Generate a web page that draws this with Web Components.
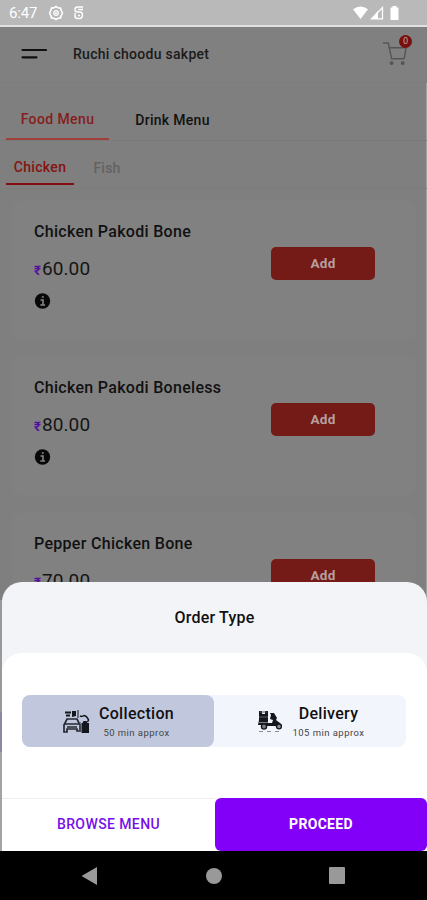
<!DOCTYPE html>
<html lang="en">
<head>
<meta charset="utf-8">
<title>Ruchi choodu sakpet</title>
<style>
  body {
    margin: 0;
    font-family: Roboto, "Noto Sans", sans-serif;
    background: #808080;
  }
</style>
</head>
<body>

<phone-screen>
  <status-bar slot="status" time="6:47"></status-bar>
  <shop-header name="Ruchi choodu sakpet" count="0"></shop-header>
  <menu-tabs></menu-tabs>
  <food-card name="Chicken Pakodi Bone" price="60.00"></food-card>
  <food-card name="Chicken Pakodi Boneless" price="80.00"></food-card>
  <food-card name="Pepper Chicken Bone" price="70.00"></food-card>
  <order-sheet slot="sheet" heading="Order Type">
    <order-option name="Collection" time="50 min approx" selected>
      <svg slot="icon" width="28" height="26" viewBox="0 0 28 26">
        <path d="M3 4.500h6M4 7.500h4" stroke="#15171f" stroke-width="1.800"/>
        <path d="M10 3h4v5l-4 1zM15.500 2h1v8h-1z" fill="#15171f"/>
        <path d="M18 8q2 1 4-.5 3 .5 4.500 4.500l-1 2" fill="none" stroke="#15171f" stroke-width="1.500"/>
        <path d="M2 17l3-6h10l3 6v6h-3v-2H5v3H2z" fill="none" stroke="#252833" stroke-width="1.700"/>
        <path d="M3 16h14M5 19h10" stroke="#252833" stroke-width="1.500"/>
        <path d="M19.500 15h1l1-2h3l1 2h1.500v10h-7.500z" fill="#15171f"/>
        <path d="M18 14v9" stroke="#4b5060"/>
      </svg>
    </order-option>
    <order-option name="Delivery" time="105 min approx">
      <svg slot="icon" width="28" height="26" viewBox="0 0 28 26">
        <path d="M3 3h3v3h3V3h3v9H3z" fill="#15171f"/>
        <path d="M4 4h7M3 9h9" stroke="#555a65"/>
        <path d="M3 12h9v5H2zM14 5h4l3 5-1 2 4 3 2 2-1 2h-4l-2-1H11v-3h5l1-3-3-1 1-4z" fill="#15171f"/>
        <path d="M3 14.500h9" stroke="#777c87"/>
        <circle cx="8" cy="18.500" r="2.600" fill="#747986" stroke="#15171f" stroke-width="1.300"/>
        <circle cx="23" cy="18.500" r="2.400" fill="#8d929e" stroke="#15171f" stroke-width="1.300"/>
        <path d="M3 23.500h23" stroke="#888d98" stroke-dasharray="4 4"/>
      </svg>
    </order-option>
  </order-sheet>
  <nav-bar slot="nav"></nav-bar>
</phone-screen>

<script>
// shared helper: clone a markup string into an open shadow root
function attach(el, html) {
  const template = document.createElement("template");
  template.innerHTML = html;
  el.attachShadow({ mode: "open" });
  el.shadowRoot.appendChild(template.content.cloneNode(true));
}

class PhoneScreen extends HTMLElement {
  constructor() {
    super();
    attach(this, `
      <style>
        :host { display: flex; flex-direction: column; width: 427px; height: 900px; overflow: hidden; }
        main {
          flex: 1;
          min-height: 0;
          position: relative;
          overflow: hidden;
          background: #7f7f7f;
          box-shadow: inset -1px 0 #a2a2a2;
        }
        .edge { position: absolute; left: 0; top: 573px; width: 3px; bottom: 0; background: linear-gradient(#999 0 112px, #8e87a2 112px 152px, #a4a4a4 152px); }
        ::slotted([slot="sheet"]) { position: absolute; left: 2px; right: 0; bottom: 0; }
      </style>
      <slot name="status"></slot>
      <main>
        <slot></slot>
        <div class="edge"></div>
        <slot name="sheet"></slot>
      </main>
      <slot name="nav"></slot>
    `);
  }
}

class StatusBar extends HTMLElement {
  constructor() {
    super();
    attach(this, `
      <style>
        :host {
          display: flex;
          align-items: center;
          box-sizing: border-box;
          height: 27px;
          padding: 1px 27px 0 9px;
          color: #fff;
          background: #b9b9b9;
          border-bottom: 2px solid #e0e0e0;
          font-size: 15px;
        }
        .time { width: 40px; letter-spacing: -.2px; }
        svg { display: block; }
        .gap { flex: 1; }
      </style>
      <span class="time">${this.getAttribute("time")}</span>
      <svg width="38" height="16" viewBox="0 0 38 16" fill="none" stroke="#fff">
        <path d="M7 1.500l2 1.300 2.500.3.700 2.400 1.300 2.500-1.300 2.500-.7 2.400-2.500.3-2 1.300-2-1.300-2.500-.3-.7-2.400L.500 8l1.300-2.500.7-2.400L5 2.800z" stroke-width="1.600"/>
        <circle cx="7" cy="8" r="2.300" stroke-width="1.300"/>
        <circle cx="7" cy="8" r="1" fill="#fff" stroke="none"/>
        <path d="M34 2h-5.500Q26 2 26 4.500T28.500 7H31q2.500 0 2.500 3T31 13.500h-2.500Q26 13.500 26 11V8M29 4.500h5M29 10.500h2" stroke-width="1.400"/>
      </svg>
      <span class="gap"></span>
      <svg width="47" height="16" viewBox="0 0 47 16" fill="#fff">
        <path d="M0 4.300Q7.500-1.300 15 4.300L7.500 14z"/>
        <path d="M29.500 2.500v11.300H18.500z" fill="none" stroke="#fff" stroke-width="1.300"/>
        <path d="M25 6v8h-7z"/>
        <path d="M37.500 2.500h2V1h4v1.500h2V15h-8z"/>
      </svg>
    `);
  }
}

class ShopHeader extends HTMLElement {
  constructor() {
    super();
    attach(this, `
      <style>
        :host {
          display: flex;
          align-items: center;
          box-sizing: border-box;
          height: 56px;
          padding: 0 14px 1px 21px;
          border-bottom: 1px solid #7d7d7d;
          background: #808080;
        }
        h1 { flex: 1; margin: 0 0 0 26px; font-size: 14px; font-weight: 500; color: #1b1b1b; letter-spacing: .28px; }
        .cart { position: relative; width: 30px; height: 40px; }
        .cart svg { display: block; margin-top: 7px; }
        .badge {
          position: absolute; left: 16px; top: 1px;
          width: 13px; height: 13px;
          border-radius: 50%;
          background: #790e0e;
          color: #bda7a7;
          font-size: 9px;
          line-height: 13px;
          text-align: center;
        }
      </style>
      <svg width="26" height="12" viewBox="0 0 26 12" stroke="#101010" stroke-width="2.200" stroke-linecap="round"><path d="M1.500 2H25M1.500 9.300H15.500"/></svg>
      <h1>${this.getAttribute("name")}</h1>
      <div class="cart">
        <svg width="26" height="25" viewBox="0 0 27 26" fill="none" stroke="#555" stroke-width="1.500">
          <path d="M0 2h5.500l1 5L9 18.500h13M6.500 7H24l-2 11.500"/>
          <circle cx="9" cy="23" r="1.300" fill="#555"/>
          <circle cx="20.500" cy="23" r="1.300" fill="#555"/>
        </svg>
        <span class="badge">${this.getAttribute("count")}</span>
      </div>
    `);
  }
}

class MenuTabs extends HTMLElement {
  constructor() {
    super();
    attach(this, `
      <style>
        :host { display: block; font-weight: 500; }
        .row { display: flex; box-sizing: border-box; padding-left: 6px; }
        .main { height: 58px; border-bottom: 1px solid #7a7a7a; font-size: 14px; }
        .sub { height: 48px; border-bottom: 1px solid #7c7c7c; }
        .tab { box-sizing: border-box; display: flex; align-items: center; justify-content: center; }
        .main .tab { width: 103px; height: 57px; padding-top: 16px; color: #111; }
        .main .on { border-bottom: 2px solid #a03e3c; color: #861d1d; padding-top: 17px; letter-spacing: .4px; }
        .main .tab + .tab { margin-left: 12px; letter-spacing: .3px; }
        .sub .tab { width: 68px; height: 44px; font-size: 14px; padding-top: 9px; color: #626262; letter-spacing: .2px; }
        .sub .on { border-bottom: 2px solid #850d0d; color: #871313; letter-spacing: .35px; padding-top: 10px; }
        .sub .tab + .tab { margin-left: -1px; }
      </style>
      <div class="row main">
        <span class="tab on">Food Menu</span>
        <span class="tab">Drink Menu</span>
      </div>
      <div class="row sub">
        <span class="tab on">Chicken</span>
        <span class="tab">Fish</span>
      </div>
    `);
  }
}

class FoodCard extends HTMLElement {
  constructor() {
    super();
    attach(this, `
      <style>
        :host {
          display: flex;
          box-sizing: border-box;
          width: 404px;
          height: 138px;
          margin: 12px 0 18.200px 12px;
          padding: 20px 41px 0 22px;
          border-radius: 8px;
          background: #818181;
        }
        .info { flex: 1; }
        h2 { margin: 1px 0 0; font-size: 16px; line-height: 20px; font-weight: 500; color: #111; letter-spacing: .3px; white-space: nowrap; }
        .price { margin-top: 15px; font-size: 19px; line-height: 24px; color: #151515; letter-spacing: .1px; }
        .price b { font-size: 13px; color: #5510a0; margin-right: 1px; }
        svg { display: block; margin-top: 10px; }
        .add {
          width: 104px; height: 33px;
          margin-top: 26px;
          border-radius: 5px;
          background: #741a17;
          color: #b4a0a0;
          font-size: 13.500px;
          letter-spacing: .3px;
          font-weight: 700;
          line-height: 32px;
          text-align: center;
        }
      </style>
      <div class="info">
        <h2>${this.getAttribute("name")}</h2>
        <div class="price"><b>₹</b>${this.getAttribute("price")}</div>
        <svg width="17" height="16" viewBox="0 0 17 16"><circle cx="8.500" cy="8" r="7.700" fill="#080808"/><path d="M6.500 7H9v5M6.300 12h4.800M7.800 4h2" stroke="#858585" stroke-width="1.600" fill="none"/></svg>
      </div>
      <span class="add">Add</span>
    `);
  }
}

class OrderSheet extends HTMLElement {
  constructor() {
    super();
    attach(this, `
      <style>
        :host {
          display: flex;
          flex-direction: column;
          height: 269px;
          border-radius: 20px 20px 0 0;
          background: #f3f4f7;
          overflow: hidden;
        }
        h3 { margin: 0; height: 71px; line-height: 72px; text-align: center; font-size: 16px; font-weight: 500; color: #111; letter-spacing: .2px; }
        .body { flex: 1; border-radius: 20px 20px 0 0; background: #fff; display: flex; flex-direction: column; }
        .options { display: flex; margin: 42px 21px 0 20px; height: 52px; border-radius: 8px; background: #f3f5fd; }
        ::slotted(*) { flex: 1; }
        .actions { display: flex; height: 53px; margin-top: auto; font-size: 14px; line-height: 52px; text-align: center; }
        .browse { flex: 1; border-top: 1px solid #eee; color: #7610e8; font-weight: 500; letter-spacing: .4px; line-height: 51px; }
        .proceed { width: 212px; background: #8200f8; color: #fff; border-radius: 6px; font-weight: 700; letter-spacing: .3px; line-height: 53px; }
      </style>
      <h3>${this.getAttribute("heading")}</h3>
      <div class="body">
        <div class="options"><slot></slot></div>
        <div class="actions">
          <span class="browse">BROWSE MENU</span>
          <span class="proceed">PROCEED</span>
        </div>
      </div>
    `);
  }
}

class OrderOption extends HTMLElement {
  constructor() {
    super();
    attach(this, `
      <style>
        :host { display: flex; align-items: center; justify-content: center; gap: 9px; border-radius: 8px; }
        :host([selected]) { background: #c1c8de; }
        .text { display: flex; flex-direction: column; align-items: center; color: #111; padding-top: 3px; }
        .name { font-size: 16px; line-height: 20px; font-weight: 500; letter-spacing: .3px; }
        .time { font-size: 9.500px; line-height: 17px; color: #444; letter-spacing: .45px; }
      </style>
      <slot name="icon"></slot>
      <div class="text">
        <span class="name">${this.getAttribute("name")}</span>
        <span class="time">${this.getAttribute("time")}</span>
      </div>
    `);
  }
}

class NavBar extends HTMLElement {
  constructor() {
    super();
    attach(this, `
      <style>
        :host { display: flex; align-items: center; justify-content: space-between; box-sizing: border-box; height: 49px; padding: 0 82px 0 81px; background: #000; }
      </style>
      <svg width="17" height="18" viewBox="0 0 17 18"><path d="M.500 9L16 0v18z" fill="#999"/></svg>
      <svg width="16" height="16" viewBox="0 0 16 16"><circle cx="8" cy="8" r="8" fill="#999"/></svg>
      <svg width="16" height="17" viewBox="0 0 16 17"><rect width="16" height="17" rx="1" fill="#999"/></svg>
    `);
  }
}

window.customElements.define("phone-screen", PhoneScreen);
window.customElements.define("status-bar", StatusBar);
window.customElements.define("shop-header", ShopHeader);
window.customElements.define("menu-tabs", MenuTabs);
window.customElements.define("food-card", FoodCard);
window.customElements.define("order-sheet", OrderSheet);
window.customElements.define("order-option", OrderOption);
window.customElements.define("nav-bar", NavBar);
</script>
</body>
</html>
